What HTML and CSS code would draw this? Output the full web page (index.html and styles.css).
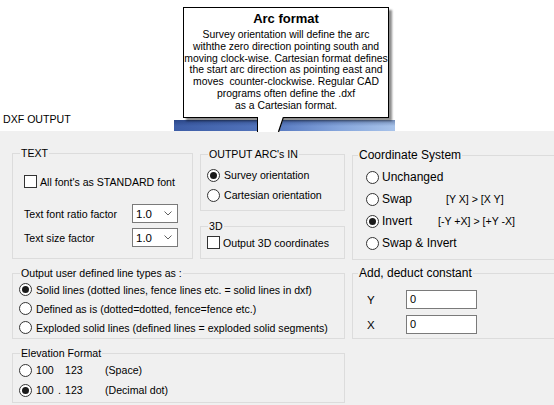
FILE: index.html
```html
<!DOCTYPE html>
<html>
<head>
<meta charset="utf-8">
<link rel="stylesheet" href="styles.css">
</head>
<body>
<div class="page">
  <div class="header"><span class="dxf">DXF OUTPUT</span></div>

  <div class="dialog">
    <div class="group g-text">
      <div class="gt">TEXT</div>
      <div class="check-row"><span class="cb"></span><span class="lbl">All font's as STANDARD font</span></div>
      <div class="field-row fr1"><span class="fl">Text font ratio factor</span><span class="combo"><span>1.0</span><svg class="chev" width="8" height="5" viewBox="0 0 8 5"><polyline points="0.5,0.5 4,4 7.5,0.5" fill="none" stroke="#606060" stroke-width="1"/></svg></span></div>
      <div class="field-row fr2"><span class="fl">Text size factor</span><span class="combo"><span>1.0</span><svg class="chev" width="8" height="5" viewBox="0 0 8 5"><polyline points="0.5,0.5 4,4 7.5,0.5" fill="none" stroke="#606060" stroke-width="1"/></svg></span></div>
    </div>

    <div class="mid">
      <div class="group g-arc">
        <div class="gt">OUTPUT ARC's IN</div>
        <div class="rrow arc-row"><span class="radio on"></span><span class="lbl">Survey orientation</span></div>
        <div class="rrow arc-row"><span class="radio"></span><span class="lbl">Cartesian orientation</span></div>
      </div>
      <div class="group g-3d">
        <div class="gt">3D</div>
        <div class="check-row c3d"><span class="cb"></span><span class="lbl">Output 3D coordinates</span></div>
      </div>
    </div>

    <div class="group g-coord">
      <div class="gt gt-wide">Coordinate System</div>
      <div class="rrow coord-row"><span class="radio"></span><span class="lbl">Unchanged</span></div>
      <div class="rrow coord-row"><span class="radio"></span><span class="lbl lbl-swap">Swap</span><span class="map">[Y X] &gt; [X Y]</span></div>
      <div class="rrow coord-row"><span class="radio on"></span><span class="lbl lbl-inv">Invert</span><span class="map">[-Y +X] &gt; [+Y -X]</span></div>
      <div class="rrow coord-row"><span class="radio"></span><span class="lbl">Swap &amp; Invert</span></div>
    </div>

    <div class="group g-lines">
      <div class="gt">Output user defined line types as :</div>
      <div class="rrow line-row"><span class="radio on"></span><span class="lbl">Solid lines (dotted lines, fence lines etc. = solid lines in dxf)</span></div>
      <div class="rrow line-row"><span class="radio"></span><span class="lbl">Defined as is (dotted=dotted, fence=fence etc.)</span></div>
      <div class="rrow line-row"><span class="radio"></span><span class="lbl">Exploded solid lines (defined lines = exploded solid segments)</span></div>
    </div>

    <div class="group g-add">
      <div class="gt gt-wide">Add, deduct constant</div>
      <div class="const-row cr1"><span class="cl">Y</span><span class="tbox">0</span></div>
      <div class="const-row cr2"><span class="cl">X</span><span class="tbox">0</span></div>
    </div>

    <div class="group g-elev">
      <div class="gt">Elevation Format</div>
      <div class="rrow line-row"><span class="radio"></span><span class="lbl"><span class="e1">100</span><span class="e2"></span><span class="e3">123</span>(Space)</span></div>
      <div class="rrow line-row"><span class="radio on"></span><span class="lbl"><span class="e1">100</span><span class="e2">.</span><span class="e3">123</span>(Decimal dot)</span></div>
    </div>
  </div>

  <div class="strip"></div>
  <div class="tip">
    <div class="tip-title">Arc format</div>
    <div class="tip-body">Survey orientation will define the arc<br>withthe zero direction pointing south and<br>moving clock-wise. Cartesian format defines<br>the start arc direction as pointing east and<br>moves&nbsp; counter-clockwise. Regular CAD<br>programs often define the .dxf<br>as a Cartesian format.</div>
  </div>
  <svg class="pointer" width="32" height="15" viewBox="0 0 32 15">
    <polygon points="2,0 29,0 24,15 2,15" fill="#fff"/>
    <line x1="2.5" y1="0" x2="2.5" y2="15" stroke="#000" stroke-width="1"/>
    <line x1="28.5" y1="0" x2="23.5" y2="15" stroke="#000" stroke-width="1.3"/>
  </svg>
</div>
</body>
</html>
```

FILE: styles.css
```css
html, body {
  margin: 0;
  padding: 0;
}
body {
  width: 554px;
  height: 405px;
  overflow: hidden;
  background: #f0f0f0;
  font-family: "Liberation Sans", Arial, sans-serif;
  font-size: 10.6px;
  color: #000;
}
.page {
  position: relative;
  width: 554px;
  height: 405px;
  overflow: hidden;
}
.header {
  height: 131px;
  box-sizing: border-box;
  background: #fff;
  padding: 112px 0 0 3px;
  line-height: 14px;
}
.dialog {
  display: grid;
  grid-template-columns: 181px 145px 220px;
  column-gap: 7px;
  padding: 22px 0 0 12px;
  align-items: start;
}
.group {
  border: 1px solid #dcdcdc;
  box-sizing: border-box;
}
.gt {
  width: fit-content;
  margin: -8px 0 0 7px;
  padding: 0 1px;
  height: 14px;
  line-height: 14px;
  background: #f0f0f0;
  white-space: nowrap;
}
.gt-wide {
  margin-left: 5px;
  font-size: 12px;
}
.lbl {
  white-space: nowrap;
  line-height: 14px;
}
.cb {
  width: 13px;
  height: 13px;
  box-sizing: border-box;
  border: 1px solid #333;
  background: #fff;
  flex: none;
}
.radio {
  width: 13px;
  height: 13px;
  box-sizing: border-box;
  border: 1px solid #333;
  border-radius: 50%;
  background: #fff;
  flex: none;
}
.radio.on::after {
  content: "";
  display: block;
  width: 7px;
  height: 7px;
  margin: 2px;
  border-radius: 50%;
  background: #1a1a1a;
}
.check-row {
  display: flex;
  align-items: center;
  gap: 3px;
  height: 13px;
}
.rrow {
  display: flex;
  align-items: center;
  gap: 4px;
}

/* TEXT */
.g-text { height: 106px; }
.g-text .check-row { margin-top: 15px; padding-left: 11px; }
.field-row {
  display: flex;
  align-items: center;
  height: 19px;
  padding-left: 11px;
}
.fr1 { margin-top: 16px; }
.fr2 { margin-top: 5px; }
.fl { width: 108px; white-space: nowrap; }
.combo {
  width: 46px;
  height: 19px;
  box-sizing: border-box;
  border: 1px solid #7a7a7a;
  background: #fff;
  display: flex;
  align-items: center;
  justify-content: space-between;
  padding: 0 5px 0 3px;
  font-size: 11.5px;
}
.chev { display: block; }

/* middle column */
.mid { margin-top: 1px; }
.g-arc { height: 57px; }
.arc-row { height: 20px; padding-left: 6px; }
.g-arc .gt + .arc-row { margin-top: 4px; }
.g-3d { height: 33px; margin-top: 15px; }
.c3d { margin-top: 3px; padding-left: 6px; }

/* coordinate system */
.g-coord {
  height: 105px;
  margin-top: 2px;
  font-size: 12px;
}
.coord-row { height: 22px; padding-left: 13px; gap: 3px; }
.g-coord .gt + .coord-row { margin-top: 4px; }
.lbl-swap { width: 61px; }
.lbl-inv { width: 53px; }
.map {
  font-size: 10.6px;
  white-space: nowrap;
}

/* line types */
.g-lines {
  grid-column: 1 / 3;
  height: 66px;
  margin-top: 13px;
}
.line-row { height: 19px; padding-left: 6px; gap: 4px; }

/* add deduct */
.g-add {
  height: 66px;
  margin-top: 13px;
}
.const-row {
  display: flex;
  align-items: center;
  height: 19px;
  padding-left: 14px;
}
.cr1 { margin-top: 10px; }
.cr2 { margin-top: 6px; }
.cl { width: 39px; font-size: 11.5px; }
.tbox {
  width: 71px;
  height: 19px;
  box-sizing: border-box;
  border: 1px solid #7a7a7a;
  background: #fff;
  padding-left: 3px;
  line-height: 17px;
  font-size: 11px;
}

/* elevation */
.g-elev {
  grid-column: 1 / 3;
  height: 50px;
  margin-top: 14px;
}
.g-elev .line-row { height: 20px; }
.e1, .e2, .e3 { display: inline-block; }
.e1 { width: 20px; }
.e2 { width: 9px; text-indent: 2px; }
.e3 { width: 40px; }

/* balloon overlay */
.strip {
  position: absolute;
  left: 174px;
  top: 120px;
  width: 221px;
  height: 11px;
  background:
    linear-gradient(to bottom, rgba(10, 30, 80, 0.35), rgba(10, 30, 80, 0) 55%),
    linear-gradient(to right, #3d5da6, #5577bf 45%, #86a6dc 75%, #a8c3ea);
}
.tip {
  position: absolute;
  left: 183px;
  top: 7px;
  width: 206px;
  height: 111px;
  box-sizing: border-box;
  border: 1px solid #000;
  background: #fff;
  box-shadow: 3px 3px 2px rgba(0, 0, 0, 0.45);
  text-align: center;
  white-space: nowrap;
}
.tip-title {
  margin-top: 3px;
  font-weight: bold;
  font-size: 13px;
  line-height: 15px;
}
.tip-body {
  margin-top: 3px;
  font-size: 10.4px;
  line-height: 11.8px;
}
.pointer {
  position: absolute;
  left: 255px;
  top: 117px;
}
```
